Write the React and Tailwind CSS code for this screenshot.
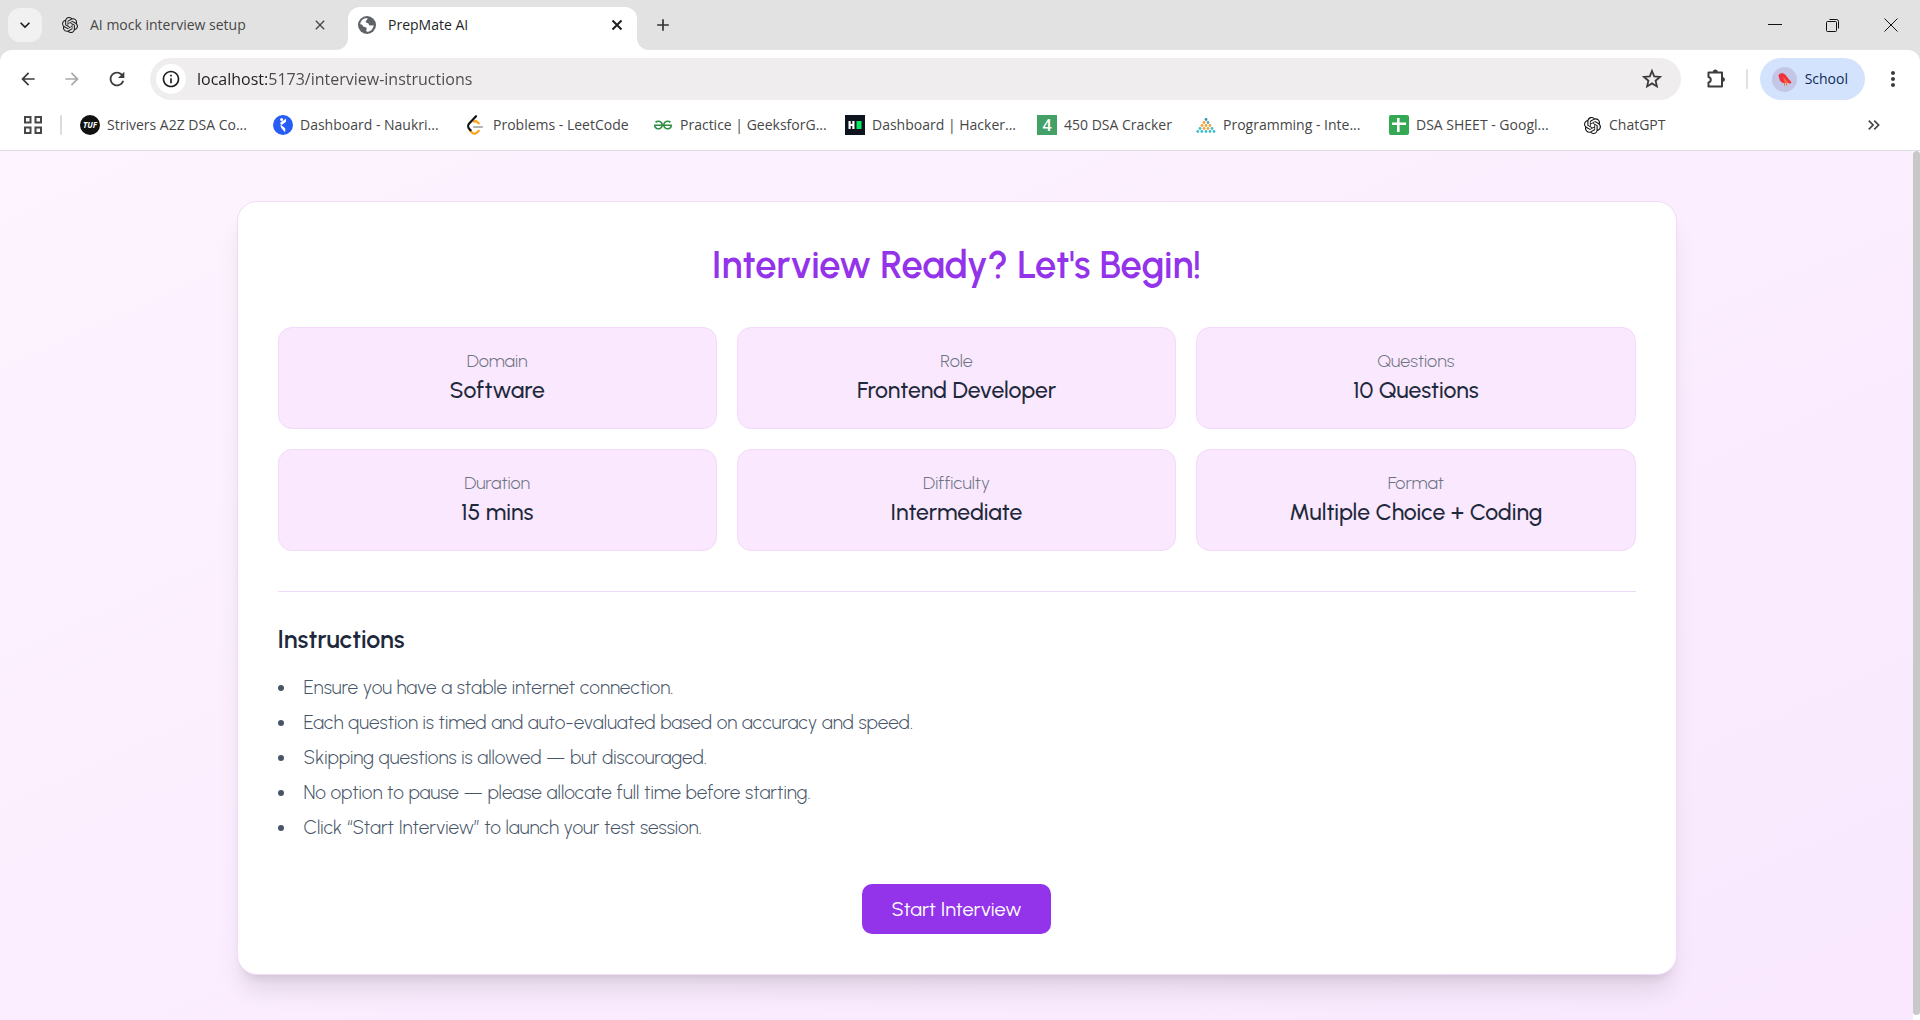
import { SiOpenai, SiGeeksforgeeks } from "react-icons/si";
import {
  MdArrowBack,
  MdArrowForward,
  MdRefresh,
  MdMoreVert,
  MdClose,
  MdAdd,
  MdKeyboardArrowDown,
  MdInfoOutline,
  MdKeyboardDoubleArrowRight,
} from "react-icons/md";

function GlobeIcon() {
  return (
    <svg viewBox="0 0 18 18" className="size-[18px] shrink-0" aria-hidden="true">
      <circle cx="9" cy="9" r="9" fill="#5f6368" />
      <path d="M9.6 2c-.4 1.200-.2 2-1.300 2.500-.9.400-.8 1.300-.2 1.900.6.500 1.700.4 2.300 1 .7.700.3 1.700 1.400 2 1.200.3 2.300-.3 3.900-.2-.5 3.800-3.200 6.500-6.700 6.500-.9-.1-.9-1.300-.5-2.100.4-.9.300-1.800-.5-2.200-.8-.4-2-.2-2.700-.9-.6-.6-.6-1.600-1.500-2L2.200 8.300C2.500 4.800 5.500 1.900 9.600 2z" fill="#fff" />
    </svg>
  );
}

function NaukriIcon() {
  return (
    <svg viewBox="0 0 20 20" className="size-5" aria-hidden="true">
      <circle cx="10" cy="10" r="10" fill="#275df5" />
      <circle cx="8.600" cy="4.400" r="1.500" fill="#fff" />
      <path d="M13 3.600v3.200L8.800 10 7 8.200c1-1.600 3.600-2.200 6-4.600z" fill="#fff" />
      <path d="M7.400 9.500l4.800 3.700v4.200c-1.700-2.400-4.600-3.700-4.800-7.900z" fill="#fff" />
    </svg>
  );
}

function LeetCodeIcon() {
  return (
    <svg viewBox="0 0 20 20" className="size-5" fill="none" strokeLinecap="round" strokeWidth="2.200" aria-hidden="true">
      <path d="M8 6.600l1.800-.6 3 2.300" stroke="#ffa116" />
      <path d="M4 15.500l2.200 2.300c1.300 1.300 3.400 1.200 4.600 0l2-2" stroke="#ffa116" />
      <path d="M10 1.200L3.200 8.500c-1.400 1.500-1.300 4 .1 5.400l1.300 1.400" stroke="#111" />
      <path d="M8 12h8" stroke="#b3b3b3" />
    </svg>
  );
}

function InterviewBitIcon() {
  const dots = [
    [10, 4.500, "#3d8bb5"],
    [8, 7.500, "#f2a33c"], [12, 7.500, "#5aa9b0"],
    [6, 10.500, "#f2a33c"], [10, 10.500, "#f2a33c"], [14, 10.500, "#f2a33c"],
    [4, 13.500, "#43bcd0"], [8, 13.500, "#f2a33c"], [12, 13.500, "#f2a33c"], [16, 13.500, "#43bcd0"],
    [1.800, 16.500, "#43bcd0"], [5.800, 16.500, "#43bcd0"], [10, 16.500, "#43bcd0"], [14, 16.500, "#43bcd0"], [18, 16.500, "#43bcd0"],
  ];
  return (
    <svg viewBox="0 0 20 20" className="size-5" aria-hidden="true">
      {dots.map(([x, y, c], i) => (
        <circle key={i} cx={x} cy={y} r="1.400" fill={c} />
      ))}
    </svg>
  );
}

function SheetsIcon() {
  return (
    <svg viewBox="0 0 20 20" className="size-5" aria-hidden="true">
      <rect width="20" height="20" rx="2" fill="#34a853" />
      <path d="M8 3h2.600v4.500H17v2.600h-6.400V17H8v-6.900H3V7.500h5z" fill="#fff" />
    </svg>
  );
}

function StarIcon() {
  return (
    <svg viewBox="0 0 22 22" className="size-[22px]" aria-hidden="true">
      <path
        d="M11 3l2.200 5.400 5.800.5-4.400 3.800 1.300 5.700-4.900-3-4.900 3 1.300-5.700L3 8.900l5.800-.5z"
        fill="none"
        stroke="currentColor"
        strokeWidth="1.800"
      />
    </svg>
  );
}

function PuzzleIcon() {
  return (
    <svg viewBox="0 0 22 22" className="size-[22px]" aria-hidden="true">
      <path
        d="M3.500 4.500h13.500v14H3.500v-4c3-.6 3-4.900 0-5.500z"
        fill="none"
        stroke="currentColor"
        strokeWidth="2"
        strokeLinejoin="round"
      />
      <path d="M7.800 4a2.500 2.500 0 0 1 5 0zM17.500 9a2.500 2.500 0 0 1 0 5z" fill="currentColor" />
    </svg>
  );
}

function BirdAvatar() {
  return (
    <svg viewBox="0 0 25 25" className="size-[25px]" aria-hidden="true">
      <circle cx="12.500" cy="12.500" r="12.500" fill="#c4c6e6" />
      <path d="M6.500 8.200C8 5.800 11.500 5.600 13.500 8c2 2.500 3.500 4.500 6 7.200l-1.300 1.600-3.400-1.400c-3.400 1.700-7-.3-7.500-4z" fill="#f0303c" />
      <path d="M11 10l5.500 5.500-3.500.3z" fill="#ff6a3d" />
      <path d="M12.500 15.500v3.200m2-3v2.800" stroke="#e8772e" strokeWidth="1" />
    </svg>
  );
}

const bookmarks = [
  {
    label: "Strivers A2Z DSA Co...",
    width: "w-36",
    icon: (
      <span className="flex size-5 items-center justify-center rounded-full bg-[#111] text-[8px] font-bold italic leading-none text-white">
        TUF
      </span>
    ),
  },
  { label: "Dashboard - Naukri...", width: "w-36", icon: <NaukriIcon /> },
  { label: "Problems - LeetCode", width: "w-[138px]", icon: <LeetCodeIcon /> },
  { label: "Practice | GeeksforG...", width: "w-[143px]", icon: <SiGeeksforgeeks className="size-[18px] text-[#2f8d46]" /> },
  {
    label: "Dashboard | Hacker...",
    width: "w-[143px]",
    icon: (
      <svg viewBox="0 0 20 20" className="size-5" aria-hidden="true">
        <rect width="20" height="20" fill="#0e141e" />
        <path d="M3.500 6h2.200v2.900h1.600V6h2.200v8H7.300v-3H5.700v3H3.500z" fill="#fff" />
        <rect x="11.500" y="6" width="5" height="8" fill="#05e860" />
      </svg>
    ),
  },
  {
    label: "450 DSA Cracker",
    width: "w-[110px]",
    icon: (
      <span className="flex size-5 items-center justify-center bg-[#43a066] text-base font-semibold leading-none text-white">
        4
      </span>
    ),
  },
  { label: "Programming - Inte...", width: "w-36", icon: <InterviewBitIcon /> },
  { label: "DSA SHEET - Googl...", width: "w-36", icon: <SheetsIcon /> },
  { label: "ChatGPT", width: "w-16", icon: <SiOpenai className="size-[17px] text-[#111]" /> },
];

function TabStrip() {
  return (
    <div className="flex h-[50px] items-center bg-[#e2e2e2] pl-2">
      <button aria-label="Search tabs" className="flex size-[34px] items-center justify-center rounded-xl bg-[#f1f1f1] text-[#1f1f1f]">
        <MdKeyboardArrowDown className="size-5" />
      </button>
      <div className="flex w-[294px] items-center pl-5 pr-2">
        <SiOpenai className="size-4 shrink-0 text-[#1f1f1f]" />
        <span className="ml-3 flex-1 whitespace-nowrap text-sm text-[#474747]">AI mock interview setup</span>
        <button aria-label="Close AI mock interview setup" className="text-[#474747]">
          <MdClose className="size-4" />
        </button>
      </div>
      <span className="size-3 self-end bg-white">
        <span className="block size-3 rounded-br-xl bg-[#e2e2e2]" />
      </span>
      <div className="flex h-[43px] w-[289px] items-center self-end rounded-t-xl bg-white pb-2 pl-2.5 pr-3">
        <GlobeIcon />
        <span className="ml-3 flex-1 whitespace-nowrap text-sm text-[#1f1f1f]">PrepMate AI</span>
        <button aria-label="Close PrepMate AI" className="text-[#1f1f1f]">
          <svg viewBox="0 0 16 16" className="size-4" stroke="currentColor" strokeWidth="2" aria-hidden="true">
            <path d="M3.500 3.500l9 9M12.500 3.500l-9 9" />
          </svg>
        </button>
      </div>
      <span className="size-3 self-end bg-white">
        <span className="block size-3 rounded-bl-xl bg-[#e2e2e2]" />
      </span>
      <button aria-label="New tab" className="ml-1 text-[#333]">
        <MdAdd className="size-5" />
      </button>
      <div className="ml-auto flex items-center gap-11 pr-[22px] text-[#111]">
        <button aria-label="Minimize">
          <svg viewBox="0 0 14 14" className="size-3.5" stroke="currentColor" fill="none">
            <path d="M0 6.500h14" />
          </svg>
        </button>
        <button aria-label="Restore">
          <svg viewBox="0 0 14 14" className="size-3.5" stroke="currentColor" fill="none">
            <rect x=".5" y="3.500" width="10" height="10" rx="1" />
            <path d="M3.500 1.500h7a2 2 0 0 1 2 2v7" />
          </svg>
        </button>
        <button aria-label="Close window">
          <svg viewBox="0 0 14 14" className="size-3.5" stroke="currentColor" fill="none">
            <path d="M.5.5l13 13M13.500.5l-13 13" />
          </svg>
        </button>
      </div>
    </div>
  );
}

function Toolbar() {
  return (
    <div className="flex h-[58px] items-center pl-[18px] pr-[15px] text-[#3c3c3c]">
      <button aria-label="Back">
        <MdArrowBack className="size-5" />
      </button>
      <button aria-label="Forward" className="ml-6 text-[#a9a9a9]">
        <MdArrowForward className="size-5" />
      </button>
      <button aria-label="Reload" className="ml-6">
        <MdRefresh className="size-[22px]" />
      </button>
      <div className="ml-[22px] flex h-[42px] flex-1 items-center rounded-full bg-[#efedee] pl-1.5 pr-[18px]">
        <button aria-label="View site information" className="flex size-[30px] items-center justify-center rounded-full bg-white text-[#1f1f1f]">
          <MdInfoOutline className="size-5" />
        </button>
        <input
          aria-label="Address"
          defaultValue="localhost:5173/interview-instructions"
          className="ml-[11px] flex-1 bg-[linear-gradient(90deg,#1f1f1f_72px,#4b4b4b_72px)] bg-clip-text text-base text-transparent outline-none"
        />
        <button aria-label="Bookmark this tab">
          <StarIcon />
        </button>
      </div>
      <button aria-label="Extensions" className="ml-6">
        <PuzzleIcon />
      </button>
      <span className="ml-[19px] h-5 w-0.5 rounded-full bg-[#e0e0e0]" />
      <button className="ml-3 flex h-[42px] items-center gap-2 rounded-full bg-[#d3e3fd] pl-3 pr-[17px] text-sm text-[#0f2a57]">
        <BirdAvatar />
        School
      </button>
      <button aria-label="Menu" className="ml-4">
        <MdMoreVert className="size-6" />
      </button>
    </div>
  );
}

function BookmarksBar() {
  return (
    <nav aria-label="Bookmarks" className="flex h-[43px] items-center border-b border-[#dedee0] pl-6 pr-9 pb-2 text-sm text-[#474747]">
      <button aria-label="Apps">
        <svg viewBox="0 0 18 18" className="size-[18px]" fill="none" stroke="#474747" strokeWidth="2">
          <path d="M1 1h5.500v5.500H1zM11.500 1H17v5.500h-5.500zM1 11.500h5.500V17H1zM11.500 11.500H17V17h-5.500z" />
        </svg>
      </button>
      <span className="mx-[18px] h-5 w-0.5 rounded-full bg-[#dcdcdc]" />
      <div className="flex gap-[22px]">
        {bookmarks.map((b) => (
          <a key={b.label} href="#" className="flex items-center gap-[7px]">
            <span className="flex size-5 shrink-0 items-center justify-center">{b.icon}</span>
            <span className={`${b.width} whitespace-nowrap`}>{b.label}</span>
          </a>
        ))}
      </div>
      <button aria-label="More bookmarks" className="ml-auto">
        <MdKeyboardDoubleArrowRight className="size-5" />
      </button>
    </nav>
  );
}

const details = [
  ["Domain", "Software"],
  ["Role", "Frontend Developer"],
  ["Questions", "10 Questions"],
  ["Duration", "15 mins"],
  ["Difficulty", "Intermediate"],
  ["Format", "Multiple Choice + Coding"],
];

const instructions = [
  "Ensure you have a stable internet connection.",
  "Each question is timed and auto-evaluated based on accuracy and speed.",
  "Skipping questions is allowed — but discouraged.",
  "No option to pause — please allocate full time before starting.",
  "Click “Start Interview” to launch your test session.",
];

function InterviewInstructions() {
  return (
    <main className="flex-1 bg-linear-to-br from-[#fdf4ff] to-[#f9e8fe] px-10 py-[50px] font-['Urbanist','Lato',sans-serif] text-[#1e293b]">
      <section className="mx-auto max-w-[1440px] rounded-[20px] border border-[#f3d9fa] bg-white p-10 shadow-xl">
        <h1 className="mb-[38px] text-center text-[38px] font-semibold leading-[47px] text-[#9333ea]">
          Interview Ready? Let's Begin!
        </h1>
        <dl className="grid grid-cols-3 gap-5">
          {details.map(([label, value]) => (
            <div key={label} className="rounded-[14px] border border-[#f3d9fa] bg-[#fae8fe] px-5 pb-[22px] pt-5 text-center">
              <dt className="text-lg font-light leading-[26px] text-[#6b7280]">{label}</dt>
              <dd className="text-[23px] font-medium leading-8">{value}</dd>
            </div>
          ))}
        </dl>
        <div className="mt-10 border-t border-[#f0dafa] pt-[30px]">
          <h2 className="mb-[17px] text-[25px] font-semibold leading-[35px]">Instructions</h2>
          <ul className="flex flex-col gap-2 text-[19px] font-light leading-[27px] text-[#475569]">
            {instructions.map((text) => (
              <li key={text} className="flex items-center gap-5 before:size-1.5 before:rounded-full before:bg-[#475569]">
                {text}
              </li>
            ))}
          </ul>
        </div>
        <div className="mt-[43px] flex justify-center">
          <button className="h-[50px] rounded-[10px] bg-[#9333ea] px-[30px] text-xl text-white">Start Interview</button>
        </div>
      </section>
    </main>
  );
}

export default function App() {
  return (
    <div className="flex h-screen flex-col overflow-hidden bg-white font-['Open_Sans',sans-serif]">
      <header>
        <TabStrip />
        <div className="bg-[#e2e2e2]">
          <div className="rounded-t-xl bg-white">
            <Toolbar />
            <BookmarksBar />
          </div>
        </div>
      </header>
      <div className="flex min-h-0 flex-1">
        <InterviewInstructions />
        <div className="w-[7px] pb-[5px]">
          <div className="h-full rounded-full bg-[#c8c8c8]" />
        </div>
      </div>
    </div>
  );
}
